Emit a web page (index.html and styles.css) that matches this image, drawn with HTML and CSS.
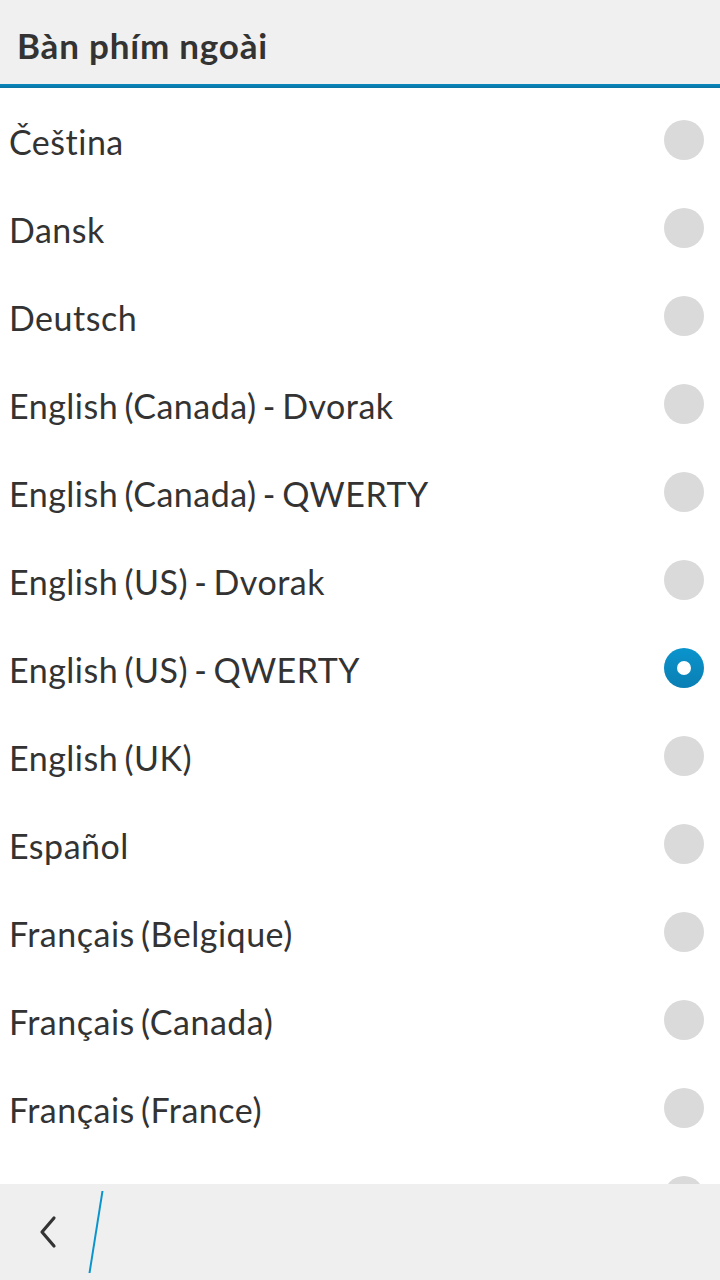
FILE: index.html
```html
<!DOCTYPE html>
<html lang="vi">
<head>
<meta charset="utf-8">
<link rel="stylesheet" href="styles.css">
</head>
<body>
<div class="screen">
  <header class="titlebar">
    <h1 class="title">Bàn phím ngoài</h1>
  </header>
  <div class="accent"></div>
  <ul class="list">
    <li class="row"><span class="label">Čeština</span><span class="radio"></span></li>
    <li class="row"><span class="label">Dansk</span><span class="radio"></span></li>
    <li class="row"><span class="label">Deutsch</span><span class="radio"></span></li>
    <li class="row"><span class="label">English (Canada) - Dvorak</span><span class="radio"></span></li>
    <li class="row"><span class="label">English (Canada) - QWERTY</span><span class="radio"></span></li>
    <li class="row"><span class="label">English (US) - Dvorak</span><span class="radio"></span></li>
    <li class="row"><span class="label">English (US) - QWERTY</span><span class="radio checked"></span></li>
    <li class="row"><span class="label">English (UK)</span><span class="radio"></span></li>
    <li class="row"><span class="label">Español</span><span class="radio"></span></li>
    <li class="row"><span class="label">Français (Belgique)</span><span class="radio"></span></li>
    <li class="row"><span class="label">Français (Canada)</span><span class="radio"></span></li>
    <li class="row"><span class="label">Français (France)</span><span class="radio"></span></li>
    <li class="row"><span class="label">Français (Suisse)</span><span class="radio"></span></li>
  </ul>
  <footer class="actionbar">
    <button class="back" aria-label="Back">
      <svg width="20" height="34" viewBox="0 0 20 34"><path d="M15 3 L3 17 L15 31" fill="none" stroke="#333" stroke-width="3.2" stroke-linecap="round" stroke-linejoin="round"/></svg>
    </button>
    <span class="divider"></span>
  </footer>
</div>
</body>
</html>
```

FILE: styles.css
```css
* { box-sizing: border-box; }
html, body { margin: 0; padding: 0; }
body { background: #fff; font-family: Lato, "Open Sans", sans-serif; color: #333; }
.screen { position: relative; width: 720px; height: 1280px; overflow: hidden; background: #fff; }
.titlebar { height: 84px; background: #f0f0f0; display: flex; align-items: center; padding-left: 17px; }
.title { margin: 0; font-size: 35px; letter-spacing: 0.8px; font-weight: 700; color: #333; padding-top: 6px; }
.accent { height: 4px; background: linear-gradient(#0a88bd, #0a74a4); }
.list { list-style: none; margin: 0; padding: 8px 0 0 0; }
.row { height: 88px; display: flex; align-items: center; justify-content: space-between; padding: 0 16px 0 9px; }
.label { font-size: 34px; letter-spacing: 0.5px; word-spacing: -3px; color: #333; padding-top: 2px; }
.radio { width: 40px; height: 40px; border-radius: 50%; background: #dadada; flex: none; }
.radio.checked { background: linear-gradient(#0a94cc, #0a7fb4); position: relative; }
.radio.checked::after { content: ""; position: absolute; left: 13px; top: 13px; width: 14px; height: 14px; border-radius: 50%; background: #fff; }
.actionbar { position: absolute; left: 0; right: 0; bottom: 0; height: 96px; background: #efefef; display: flex; align-items: center; }
.back { border: 0; background: none; padding: 0; margin-left: 37px; margin-top: 0; width: 24px; height: 40px; display: flex; align-items: center; justify-content: center; }
.divider { width: 2px; height: 82px; background: #0a94cc; margin-left: 34px; transform: skewX(-9deg); }
```
